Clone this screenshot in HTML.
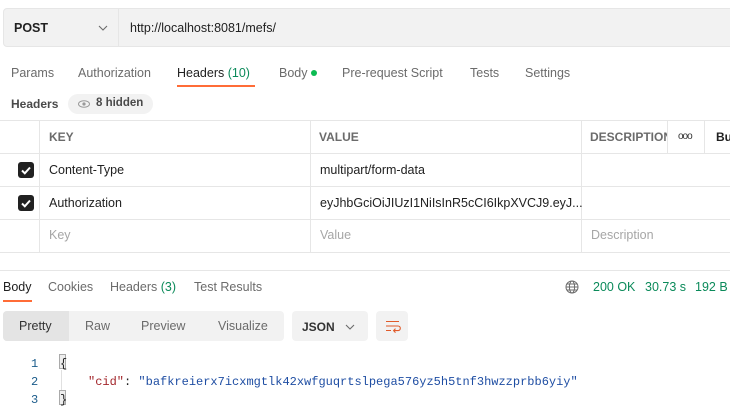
<!DOCTYPE html>
<html><head><meta charset="utf-8"><style>
*{box-sizing:border-box;margin:0;padding:0}
body{width:730px;height:418px;overflow:hidden;background:#fff;font-family:"Liberation Sans",sans-serif;font-size:12.5px;color:#212121;position:relative}
.a{position:absolute;white-space:nowrap}
.g{color:#6b6b6b}
.ln{position:absolute;background:#e6e6e6}
.cb{position:absolute;left:18px;width:16px;height:16px;border-radius:3px;background:#212121}
.cb svg{position:absolute;left:2px;top:2px}
.ph{color:#a6a6a6}
</style></head><body>
<div class="a" style="left:3px;top:8px;width:740px;height:39px;background:#f2f2f2;border:1px solid #e6e6e6;border-radius:4px"></div>
<div class="ln" style="left:118px;top:9px;width:1px;height:37px"></div>
<div class="a" style="left:14px;top:21px;font-weight:bold;font-size:12.5px">POST</div>
<svg class="a" style="left:98px;top:25px" width="10" height="6"><path d="M1 1l4 4 4-4" stroke="#6b6b6b" fill="none" stroke-width="1.1"/></svg>
<div class="a" style="left:130px;top:21px">http://localhost:8081/mefs/</div>
<div class="a g" style="left:11px;top:66px">Params</div>
<div class="a g" style="left:78px;top:66px">Authorization</div>
<div class="a" style="left:177px;top:66px">Headers <span style="color:#0b8a5a">(10)</span></div>
<div class="a" style="left:177px;top:85px;width:78px;height:2px;background:#ff6c37"></div>
<div class="a g" style="left:279px;top:66px">Body <span style="display:inline-block;width:6px;height:6px;border-radius:50%;background:#0cbb52;vertical-align:1px"></span></div>
<div class="a g" style="left:342px;top:66px">Pre-request Script</div>
<div class="a g" style="left:470px;top:66px">Tests</div>
<div class="a g" style="left:525px;top:66px">Settings</div>
<div class="a" style="left:11px;top:97px;font-weight:bold;color:#4a4a4a;font-size:12px">Headers</div>
<div class="a" style="left:68px;top:94px;width:85px;height:20px;border-radius:10px;background:#f2f2f2"></div>
<svg class="a" style="left:78px;top:100px" width="12" height="8"><ellipse cx="6" cy="4" rx="5.5" ry="3.3" fill="none" stroke="#9a9a9a" stroke-width="1"/><circle cx="6" cy="4" r="1.6" fill="#9a9a9a"/></svg>
<div class="a" style="left:96px;top:97px;font-weight:bold;color:#4a4a4a;font-size:11.5px">8 hidden</div>
<div class="ln" style="left:0;top:120px;width:730px;height:1px"></div>
<div class="ln" style="left:0;top:153px;width:730px;height:1px"></div>
<div class="ln" style="left:0;top:186px;width:730px;height:1px"></div>
<div class="ln" style="left:0;top:219px;width:730px;height:1px"></div>
<div class="ln" style="left:0;top:252px;width:730px;height:1px"></div>
<div class="ln" style="left:39px;top:120px;width:1px;height:132px"></div>
<div class="ln" style="left:310px;top:120px;width:1px;height:132px"></div>
<div class="ln" style="left:581px;top:120px;width:1px;height:132px"></div>
<div class="ln" style="left:667px;top:120px;width:1px;height:33px"></div>
<div class="ln" style="left:704px;top:120px;width:1px;height:33px"></div>
<div class="a" style="left:49px;top:130px;font-weight:bold;color:#6b6b6b;font-size:12px">KEY</div>
<div class="a" style="left:319px;top:130px;font-weight:bold;color:#6b6b6b;font-size:12px">VALUE</div>
<div class="a" style="left:590px;top:130px;width:77px;overflow:hidden;font-weight:bold;color:#6b6b6b;font-size:12px">DESCRIPTION</div>
<div class="a" style="left:678px;top:131px;color:#333;font-size:10px;letter-spacing:-1px">ooo</div>
<div class="a" style="left:716px;top:130px;font-weight:bold;font-size:12px">Bu</div>
<div class="cb" style="top:162px"><svg width="12" height="12"><path d="M2 6.5l2.8 2.8L10 3.5" stroke="#fff" stroke-width="2" fill="none"/></svg></div>
<div class="cb" style="top:195px"><svg width="12" height="12"><path d="M2 6.5l2.8 2.8L10 3.5" stroke="#fff" stroke-width="2" fill="none"/></svg></div>
<div class="a" style="left:49px;top:163px">Content-Type</div>
<div class="a" style="left:320px;top:163px">multipart/form-data</div>
<div class="a" style="left:49px;top:196px">Authorization</div>
<div class="a" style="left:320px;top:196px">eyJhbGciOiJIUzI1NiIsInR5cCI6IkpXVCJ9.eyJ...</div>
<div class="a ph" style="left:49px;top:228px">Key</div>
<div class="a ph" style="left:320px;top:228px">Value</div>
<div class="a ph" style="left:591px;top:228px">Description</div>
<div class="ln" style="left:0;top:270px;width:730px;height:1px"></div>
<div class="a" style="left:3px;top:280px">Body</div>
<div class="a" style="left:3px;top:300px;width:29px;height:2px;background:#ff6c37"></div>
<div class="a g" style="left:48px;top:280px">Cookies</div>
<div class="a g" style="left:110px;top:280px">Headers <span style="color:#0b8a5a">(3)</span></div>
<div class="a g" style="left:194px;top:280px">Test Results</div>
<svg class="a" style="left:565px;top:280px" width="14" height="14"><g fill="none" stroke="#6b6b6b" stroke-width="1"><circle cx="7" cy="7" r="6"/><ellipse cx="7" cy="7" rx="2.6" ry="6"/><path d="M1 7h12M2 4h10M2 10h10"/></g></svg>
<div class="a" style="left:593px;top:280px;color:#0b8a5a">200 OK</div>
<div class="a" style="left:645px;top:280px;color:#0b8a5a">30.73 s</div>
<div class="a" style="left:695px;top:280px;color:#0b8a5a">192 B</div>
<div class="a" style="left:3px;top:311px;width:281px;height:30px;background:#f2f2f2;border-radius:4px"></div>
<div class="a" style="left:3px;top:311px;width:66px;height:30px;background:#e4e4e4;border-radius:4px 0 0 4px"></div>
<div class="a" style="left:19px;top:319px;color:#333">Pretty</div>
<div class="a g" style="left:85px;top:319px">Raw</div>
<div class="a g" style="left:141px;top:319px">Preview</div>
<div class="a g" style="left:218px;top:319px">Visualize</div>
<div class="a" style="left:292px;top:311px;width:76px;height:30px;background:#f2f2f2;border-radius:4px"></div>
<div class="a" style="left:302px;top:320px;font-weight:bold;color:#333;font-size:12px">JSON</div>
<svg class="a" style="left:345px;top:324px" width="10" height="6"><path d="M1 1l4 4 4-4" stroke="#6b6b6b" fill="none" stroke-width="1.1"/></svg>
<div class="a" style="left:376px;top:311px;width:32px;height:30px;background:#f2f2f2;border-radius:4px"></div>
<svg class="a" style="left:385px;top:320px" width="16" height="13"><g fill="none" stroke="#e05b2b" stroke-width="1.1"><path d="M1 1.5h13M1 6h12a2.3 2.3 0 0 1 0 4.6H9M1 10.5h5"/><path d="M10.5 8.6L8.6 10.6l1.9 2"/></g></svg>
<div class="a" style="left:31px;top:355px;font-family:'Liberation Mono',monospace;font-size:12px;color:#1a5b8a;line-height:18px">1<br>2<br>3</div>
<div class="ln" style="left:61px;top:370px;width:1px;height:22px;background:#e0e0e0"></div>
<div class="a" style="left:59px;top:354px;width:7px;height:15px;border:1px solid #aaa;background:#eee"></div>
<div class="a" style="left:59px;top:390px;width:7px;height:15px;border:1px solid #aaa;background:#eee"></div>
<div class="a" style="left:60px;top:355px;font-family:'Liberation Mono',monospace;font-size:12px;line-height:18px">{<br><span style="padding-left:28px;color:#a3262b">"cid"</span>: <span style="color:#1f4ea3">"bafkreierx7icxmgtlk42xwfguqrtslpega576yz5h5tnf3hwzzprbb6yiy"</span><br>}</div>
</body></html>
